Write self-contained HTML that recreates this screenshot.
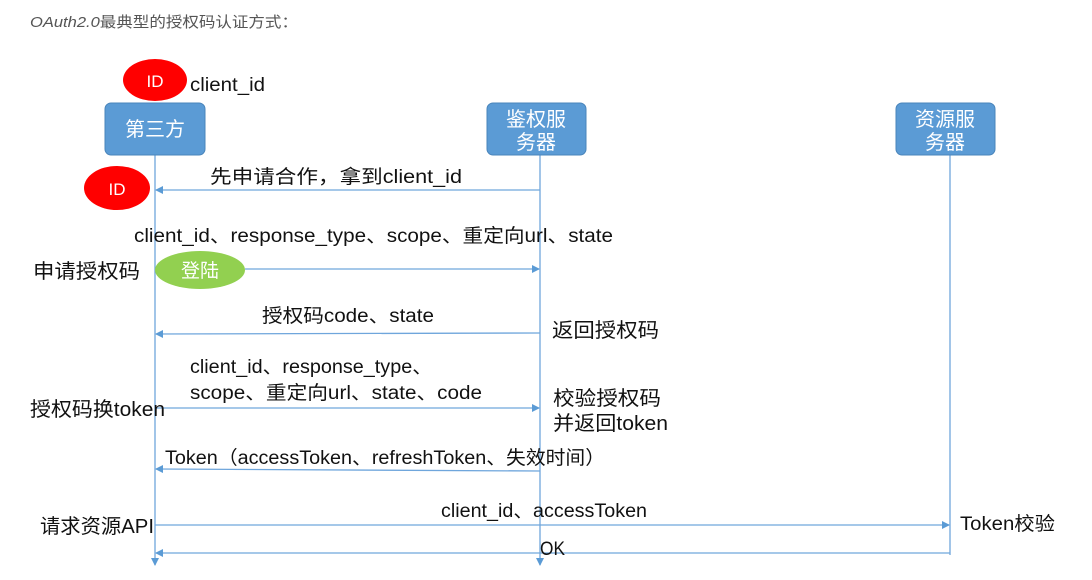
<!DOCTYPE html>
<html><head><meta charset="utf-8"><style>
body{margin:0;background:#fff;width:1092px;height:575px;overflow:hidden;}
svg text{font-family:"Liberation Sans","Noto Sans CJK SC",sans-serif;}
</style></head><body>
<svg width="1092" height="575" xmlns="http://www.w3.org/2000/svg">
<defs>
<marker id="a" markerWidth="8" markerHeight="8" refX="7" refY="4" orient="auto" markerUnits="userSpaceOnUse"><path d="M0,0 L8,4 L0,8 z" fill="#5b9bd5"/></marker>
</defs>
<text x="30" y="27" font-size="15" fill="#555" textLength="268" lengthAdjust="spacingAndGlyphs"><tspan font-style="italic">OAuth2.0</tspan>最典型的授权码认证方式：</text>

<g stroke="#6fa6dc" stroke-width="1.3" fill="none">
<line x1="155" y1="155" x2="155" y2="565" marker-end="url(#a)"/>
<line x1="540" y1="155" x2="540" y2="565" marker-end="url(#a)"/>
<line x1="950" y1="155" x2="950" y2="555"/>
<line x1="540" y1="190" x2="156" y2="190" marker-end="url(#a)"/>
<line x1="245" y1="269" x2="539" y2="269" marker-end="url(#a)"/>
<line x1="540" y1="333" x2="156" y2="334" marker-end="url(#a)"/>
<line x1="155" y1="408" x2="539" y2="408" marker-end="url(#a)"/>
<line x1="540" y1="471" x2="156" y2="469" marker-end="url(#a)"/>
<line x1="155" y1="525" x2="949" y2="525" marker-end="url(#a)"/>
<line x1="950" y1="553" x2="156" y2="553" marker-end="url(#a)"/>
</g>

<ellipse cx="155" cy="80" rx="32" ry="21" fill="#ff0000"/>
<text x="155" y="87" font-size="17" fill="#fff" text-anchor="middle">ID</text>
<text x="190" y="91" font-size="19" fill="#111" textLength="75" lengthAdjust="spacingAndGlyphs">client_id</text>

<rect x="105" y="103" width="100" height="52" rx="6" fill="#5b9bd5" stroke="#4a85bb"/>
<text x="155" y="136" font-size="20" fill="#fff" text-anchor="middle">第三方</text>
<rect x="487" y="103" width="99" height="52" rx="6" fill="#5b9bd5" stroke="#4a85bb"/>
<text x="536" y="126" font-size="20" fill="#fff" text-anchor="middle">鉴权服</text>
<text x="536" y="149" font-size="20" fill="#fff" text-anchor="middle">务器</text>
<rect x="896" y="103" width="99" height="52" rx="6" fill="#5b9bd5" stroke="#4a85bb"/>
<text x="945" y="126" font-size="20" fill="#fff" text-anchor="middle">资源服</text>
<text x="945" y="149" font-size="20" fill="#fff" text-anchor="middle">务器</text>

<ellipse cx="117" cy="188" rx="33" ry="22" fill="#ff0000"/>
<text x="117" y="195" font-size="17" fill="#fff" text-anchor="middle">ID</text>
<text x="210" y="183" font-size="19" fill="#111" textLength="252" lengthAdjust="spacingAndGlyphs">先申请合作，拿到client_id</text>

<text x="134" y="242" font-size="19" fill="#111" textLength="479" lengthAdjust="spacingAndGlyphs">client_id、response_type、scope、重定向url、state</text>
<text x="33" y="278" font-size="20" fill="#111" textLength="107" lengthAdjust="spacingAndGlyphs">申请授权码</text>
<ellipse cx="200" cy="270" rx="45" ry="19" fill="#92d050"/>
<text x="200" y="277" font-size="19" fill="#fff" text-anchor="middle">登陆</text>

<text x="262" y="322" font-size="19" fill="#111" textLength="172" lengthAdjust="spacingAndGlyphs">授权码code、state</text>
<text x="552" y="337" font-size="20" fill="#111" textLength="107" lengthAdjust="spacingAndGlyphs">返回授权码</text>

<text x="190" y="373" font-size="19" fill="#111" textLength="242" lengthAdjust="spacingAndGlyphs">client_id、response_type、</text>
<text x="190" y="399" font-size="19" fill="#111" textLength="292" lengthAdjust="spacingAndGlyphs">scope、重定向url、state、code</text>
<text x="30" y="416" font-size="20" fill="#111" textLength="135" lengthAdjust="spacingAndGlyphs">授权码换token</text>
<text x="553" y="405" font-size="20" fill="#111" textLength="108" lengthAdjust="spacingAndGlyphs">校验授权码</text>
<text x="553" y="430" font-size="20" fill="#111" textLength="115" lengthAdjust="spacingAndGlyphs">并返回token</text>

<text x="165" y="464" font-size="19" fill="#111" textLength="440" lengthAdjust="spacingAndGlyphs">Token（accessToken、refreshToken、失效时间）</text>

<text x="441" y="517" font-size="19" fill="#111" textLength="206" lengthAdjust="spacingAndGlyphs">client_id、accessToken</text>
<text x="40" y="533" font-size="20" fill="#111" textLength="114" lengthAdjust="spacingAndGlyphs">请求资源API</text>
<text x="960" y="530" font-size="19" fill="#111" textLength="95" lengthAdjust="spacingAndGlyphs">Token校验</text>
<text x="540" y="555" font-size="19" fill="#111" textLength="25" lengthAdjust="spacingAndGlyphs">OK</text>
</svg>
</body></html>
